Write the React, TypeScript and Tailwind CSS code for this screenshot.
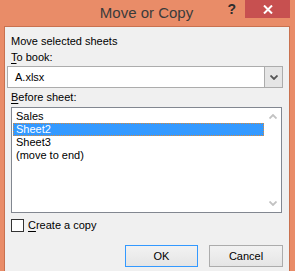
const font = "font-['Segoe_UI','Liberation_Sans',Arial,sans-serif]";

function Chevron({ up, color }: { up?: boolean; color: string }) {
  return (
    <svg width="8" height="5" viewBox="0 0 8 5" className={up ? "rotate-180" : ""}>
      <path d="M0.5 0.5 L4 4 L7.5 0.5" fill="none" stroke={color} strokeWidth="1.8" />
    </svg>
  );
}

function Label({ accel, rest }: { accel: string; rest: string }) {
  return (
    <div className="h-[15px] leading-[15px] pl-[6px]">
      <span className="underline underline-offset-2">{accel}</span>
      {rest}
    </div>
  );
}

export default function App() {
  const sheets = ["Sales", "Sheet2", "Sheet3", "(move to end)"];
  return (
    <div className={`w-[295px] h-[271px] overflow-hidden bg-[#e98c68] flex flex-col ${font}`}>
      {/* title bar */}
      <div className="relative h-[26px] shrink-0">
        <div className="text-center text-[15px] leading-[26px] text-[#3b3b3b] pr-[2px]">Move or Copy</div>
        <div className="absolute top-0 right-[5px] flex items-start">
          <span className="text-[14px] font-bold leading-[16px] text-[#2d2d2d] mt-[1px] mr-[9px]">?</span>
          <div className="w-[45px] h-[18px] bg-[#c75050] flex items-center justify-center">
            <svg width="10" height="9" viewBox="0 0 10 9">
              <path d="M1 0.5 L9 8.5 M9 0.5 L1 8.5" stroke="white" strokeWidth="2" />
            </svg>
          </div>
        </div>
      </div>

      {/* client area */}
      <div className="flex-1 ml-[4px] mr-[5px] bg-[#f0f0f0] border-l border-r border-t border-[#c9714f] text-[11px] text-black">
        <div className="mt-[7px] h-[15px] leading-[15px] pl-[6px]">Move selected sheets</div>
        <div className="mt-[1px]">
          <Label accel="T" rest="o book:" />
        </div>

        {/* combo */}
        <div className="mt-[1px] ml-[2px] w-[276px] h-[22px] bg-white border border-[#acacac] flex">
          <div className="flex-1 pl-[7px] leading-[20px]">A.xlsx</div>
          <div className="w-[18px] h-[20px] border-l border-[#acacac] bg-[#e5e5e5] flex items-center justify-center">
            <Chevron color="#555555" />
          </div>
        </div>

        <div className="mt-[2px]">
          <Label accel="B" rest="efore sheet:" />
        </div>

        {/* list */}
        <div className="mt-[2px] ml-[6px] w-[271px] h-[106px] bg-white border border-[#828790] flex">
          <div className="flex-1 pt-[2px] pl-[1px]">
            {sheets.map((s) => (
              <div
                key={s}
                className={
                  s === "Sheet2"
                    ? "h-[13px] leading-[11px] pl-[2px] bg-[#3399ff] text-white border border-dotted border-[#d88a3a]"
                    : "h-[13px] leading-[13px] pl-[3px]"
                }
              >
                {s}
              </div>
            ))}
          </div>
          <div className="w-[17px] flex flex-col justify-between items-center py-[6px]">
            <Chevron up color="#c2c2c2" />
            <Chevron color="#c2c2c2" />
          </div>
        </div>

        {/* checkbox */}
        <div className="mt-[6px] ml-[6px] flex items-center h-[13px]">
          <div className="w-[13px] h-[13px] border border-[#333333] bg-white" />
          <div className="ml-[4px] leading-[13px]">
            <span className="underline underline-offset-2">C</span>reate a copy
          </div>
        </div>

        {/* buttons */}
        <div className="mt-[13px] flex justify-end pr-[6px] gap-[11px]">
          <div className="w-[73px] h-[22px] border border-[#3399ff] bg-gradient-to-b from-[#f2f2f2] to-[#e5e5e5] flex items-center justify-center">
            OK
          </div>
          <div className="w-[74px] h-[22px] border border-[#acacac] bg-gradient-to-b from-[#f2f2f2] to-[#e5e5e5] flex items-center justify-center">
            Cancel
          </div>
        </div>
      </div>
    </div>
  );
}
